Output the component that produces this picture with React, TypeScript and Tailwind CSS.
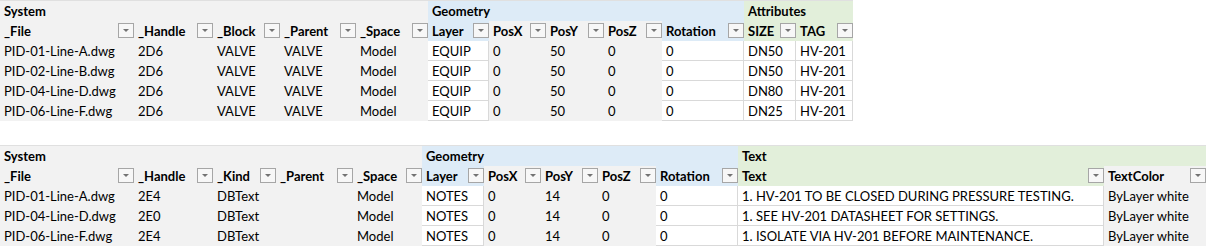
type Fill = 'gray' | 'blue' | 'green' | 'white';

interface Column {
    label: string;
    head: Fill;
    body: Fill;
}

interface Group {
    label: string;
    span: string;
    fill: Fill;
}

const fillClass: Record<Fill, string> = {
    gray: 'bg-[#f2f2f2]',
    blue: 'bg-[#ddebf7]',
    green: 'bg-[#e2efda]',
    white: 'bg-white border-r border-b border-[#d9d9d9]',
};

const systemCols = (third: string): Column[] => [
    { label: '_File', head: 'gray', body: 'gray' },
    { label: '_Handle', head: 'gray', body: 'gray' },
    { label: third, head: 'gray', body: 'gray' },
    { label: '_Parent', head: 'gray', body: 'gray' },
    { label: '_Space', head: 'gray', body: 'gray' },
    { label: 'Layer', head: 'blue', body: 'white' },
    { label: 'PosX', head: 'gray', body: 'gray' },
    { label: 'PosY', head: 'gray', body: 'gray' },
    { label: 'PosZ', head: 'gray', body: 'gray' },
    { label: 'Rotation', head: 'blue', body: 'white' },
];

const blockCols: Column[] = [
    ...systemCols('_Block'),
    { label: 'SIZE', head: 'green', body: 'white' },
    { label: 'TAG', head: 'green', body: 'white' },
];

const textCols: Column[] = [
    ...systemCols('_Kind'),
    { label: 'Text', head: 'green', body: 'white' },
    { label: 'TextColor', head: 'gray', body: 'gray' },
];

const blockRows = [
    ['PID-01-Line-A.dwg', '2D6', 'VALVE', 'VALVE', 'Model', 'EQUIP', '0', '50', '0', '0', 'DN50', 'HV-201'],
    ['PID-02-Line-B.dwg', '2D6', 'VALVE', 'VALVE', 'Model', 'EQUIP', '0', '50', '0', '0', 'DN50', 'HV-201'],
    ['PID-04-Line-D.dwg', '2D6', 'VALVE', 'VALVE', 'Model', 'EQUIP', '0', '50', '0', '0', 'DN80', 'HV-201'],
    ['PID-06-Line-F.dwg', '2D6', 'VALVE', 'VALVE', 'Model', 'EQUIP', '0', '50', '0', '0', 'DN25', 'HV-201'],
];

const textRows = [
    ['PID-01-Line-A.dwg', '2E4', 'DBText', '', 'Model', 'NOTES', '0', '14', '0', '0', '1. HV-201 TO BE CLOSED DURING PRESSURE TESTING.', 'ByLayer white'],
    ['PID-04-Line-D.dwg', '2E0', 'DBText', '', 'Model', 'NOTES', '0', '14', '0', '0', '1. SEE HV-201 DATASHEET FOR SETTINGS.', 'ByLayer white'],
    ['PID-06-Line-F.dwg', '2E4', 'DBText', '', 'Model', 'NOTES', '0', '14', '0', '0', '1. ISOLATE VIA HV-201 BEFORE MAINTENANCE.', 'ByLayer white'],
];

function FilterButton() {
    return (
        <span className="ml-auto mt-[2px] flex h-[15px] w-[16px] shrink-0 items-center justify-center border border-[#a6a6a6] bg-[#f7f7f7]">
            <span className="h-0 w-0 border-x-[3px] border-t-[3px] border-x-transparent border-t-[#737373]" />
        </span>
    );
}

interface SheetTableProps {
    grid: string;
    groups: Group[];
    columns: Column[];
    rows: string[][];
}

function SheetTable({ grid, groups, columns, rows }: SheetTableProps) {
    return (
        <div className={`grid w-fit auto-rows-[20px] border-t border-[#e0e0e0] ${grid}`}>
            {groups.map((g) => (
                <div key={g.label} className={`${g.span} ${fillClass[g.fill]} overflow-hidden pl-[4px] font-bold`}>
                    {g.label}
                </div>
            ))}
            {columns.map((c) => (
                <div key={c.label} className={`flex items-start overflow-hidden ${fillClass[c.head]} pl-[4px] font-bold`}>
                    <span className="whitespace-nowrap">{c.label}</span>
                    <FilterButton />
                </div>
            ))}
            {rows.map((row, ri) =>
                row.map((cell, ci) => (
                    <div key={`${ri}-${ci}`} className={`box-border whitespace-nowrap overflow-hidden pl-[4px] ${fillClass[columns[ci].body]}`}>
                        {cell}
                    </div>
                ))
            )}
        </div>
    );
}

export default function App() {
    return (
        <div className="h-[246px] w-[1206px] overflow-hidden bg-white font-['Lato',sans-serif] text-[13px] leading-[21px] text-black">
            <SheetTable
                grid="grid-cols-[134px_79px_67px_76px_72px_61px_57px_58px_58px_82px_52px_57px]"
                groups={[
                    { label: 'System', span: 'col-span-5', fill: 'gray' },
                    { label: 'Geometry', span: 'col-span-5', fill: 'blue' },
                    { label: 'Attributes', span: 'col-span-2', fill: 'green' },
                ]}
                columns={blockCols}
                rows={blockRows}
            />
            <div className="h-[24px]" />
            <SheetTable
                grid="grid-cols-[134px_79px_63px_77px_69px_62px_57px_57px_58px_82px_366px_102px]"
                groups={[
                    { label: 'System', span: 'col-span-5', fill: 'gray' },
                    { label: 'Geometry', span: 'col-span-5', fill: 'blue' },
                    { label: 'Text', span: 'col-span-2', fill: 'green' },
                ]}
                columns={textCols}
                rows={textRows}
            />
        </div>
    );
}
